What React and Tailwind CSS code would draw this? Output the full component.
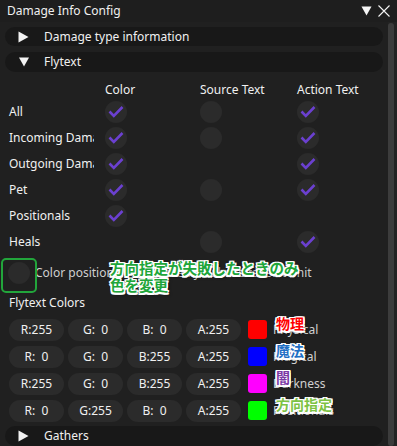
import React from "react";

const outline =
  "[text-shadow:1.5px_0_0_#fff,-1.5px_0_0_#fff,0_1.5px_0_#fff,0_-1.5px_0_#fff,1.5px_1.5px_0_#fff,-1.5px_-1.5px_0_#fff,1.5px_-1.5px_0_#fff,-1.5px_1.5px_0_#fff,2px_2px_3px_rgba(0,0,0,0.7)]";

const rows = [
  { label: "All", color: true, source: false, action: true },
  { label: "Incoming Damage", color: true, source: false, action: true },
  { label: "Outgoing Damage", color: true, source: null, action: true },
  { label: "Pet", color: true, source: false, action: true },
  { label: "Positionals", color: true, source: null, action: null },
  { label: "Heals", color: null, source: false, action: true },
];

const colors = [
  { r: "R:255", g: "G:  0", b: "B:  0", a: "A:255", swatch: "bg-[#ff0000]", label: "Physical", note: "物理", noteColor: "text-[#ff0000]" },
  { r: "R:  0", g: "G:  0", b: "B:255", a: "A:255", swatch: "bg-[#0000ff]", label: "Magical", note: "魔法", noteColor: "text-[#1f6fc4]" },
  { r: "R:255", g: "G:  0", b: "B:255", a: "A:255", swatch: "bg-[#ff00ff]", label: "Darkness", note: "闇", noteColor: "text-[#7b3aa6]" },
  { r: "R:  0", g: "G:255", b: "B:  0", a: "A:255", swatch: "bg-[#00ff00]", label: "Positionals", note: "方向指定", noteColor: "text-[#7cc243]" },
];

function Box({ checked }) {
  if (checked === null) return <div className="w-[22px] h-[22px]" />;
  return (
    <div className="w-[22px] h-[22px] rounded-full bg-[#2b2b2b] flex items-center justify-center">
      {checked && (
        <svg width="22" height="22" viewBox="0 0 22 22">
          <path d="M4.5 10.5 L8.8 14.8 L17.5 6" stroke="#6b40d0" strokeWidth="2.6" fill="none" />
        </svg>
      )}
    </div>
  );
}

function Header({ open, title }) {
  return (
    <div className="h-[20px] w-[378px] rounded-full bg-[#181818] flex items-center">
      <div className="w-[39px] pl-[13px] flex items-center">
        {open ? (
          <svg width="12" height="10" viewBox="0 0 12 10">
            <path d="M1 0.5 H11 L6 9.5 Z" fill="#f2f2f2" />
          </svg>
        ) : (
          <svg width="11" height="12" viewBox="0 0 11 12">
            <path d="M0.5 0.5 L10.5 6 L0.5 11.5 Z" fill="#f2f2f2" />
          </svg>
        )}
      </div>
      <span>{title}</span>
    </div>
  );
}

function Field({ text }) {
  return (
    <div className="w-[55px] h-[22px] rounded-full bg-[#2b2b2b] flex items-center justify-center whitespace-pre">
      {text}
    </div>
  );
}

export default function App() {
  return (
    <div className="w-[397px] h-[446px] overflow-hidden bg-[#202020] text-[#f0f0f0] text-[12px] leading-[16px] font-['Noto_Sans','Noto_Sans_CJK_JP',sans-serif] flex flex-col">
      <div className="h-[22px] shrink-0 flex items-center pl-[7px] pr-[7px] bg-[#1e1e1e]">
        <span className="flex-1">Damage Info Config</span>
        <svg width="11" height="10" viewBox="0 0 11 10" className="mr-[6px]">
          <path d="M0.5 0.5 H10.5 L5.5 9.5 Z" fill="#f4f4f4" />
        </svg>
        <svg width="12" height="12" viewBox="0 0 12 12">
          <path d="M0.5 0.5 L11.5 11.5 M11.5 0.5 L0.5 11.5" stroke="#f4f4f4" strokeWidth="1.1" />
        </svg>
      </div>

      <div className="flex-1 flex min-h-0">
        <div className="w-[388px] pl-[5px] pt-[5px] flex flex-col">
          <Header open={false} title="Damage type information" />
          <div className="mt-[6px]">
            <Header open={true} title="Flytext" />
          </div>

          <div className="mt-[8px] grid grid-cols-[100px_95px_97px_1fr] h-[20px] items-center">
            <span />
            <span>Color</span>
            <span>Source Text</span>
            <span>Action Text</span>
          </div>
          {rows.map((row) => (
            <div key={row.label} className="grid grid-cols-[100px_95px_97px_1fr] h-[27px] items-center">
              <span className="pl-[4px] w-[89px] overflow-hidden whitespace-nowrap">{row.label}</span>
              <Box checked={row.color} />
              <Box checked={row.source} />
              <Box checked={row.action} />
            </div>
          ))}

          <div className="relative mt-[5px] h-[27px] flex items-center pl-[3px] gap-[5px]">
            <div className="absolute left-[-4px] top-[-2px] w-[36px] h-[35px] rounded-[5px] border-2 border-[#22a53b]" />
            <Box checked={false} />
            <span className="whitespace-nowrap text-[#cfcfcf]">Color positionals only when you have failed to hit</span>
            <div className={`absolute left-[105px] top-[0px] text-[14.5px] leading-[17px] font-bold text-[#20a63a] ${outline}`}>
              方向指定が失敗したときのみ
              <br />
              色を変更
            </div>
          </div>

          <div className="mt-[9px] pl-[4px] h-[16px]">Flytext Colors</div>

          <div className="mt-[5px] flex flex-col">
            {colors.map((c) => (
              <div key={c.label} className="relative h-[27px] flex items-center pl-[4px] gap-[4px]">
                <Field text={c.r} />
                <Field text={c.g} />
                <Field text={c.b} />
                <Field text={c.a} />
                <div className={`ml-[3px] w-[19px] h-[19px] rounded-[3px] ${c.swatch}`} />
                <span className="ml-[2px] text-[#d0d0d0]">{c.label}</span>
                <span className={`absolute left-[271px] top-[0px] text-[14px] leading-[16px] font-bold ${c.noteColor} ${outline}`}>
                  {c.note}
                </span>
              </div>
            ))}
          </div>

          <div className="mt-[2px]">
            <Header open={false} title="Gathers" />
          </div>
        </div>
        <div className="w-[9px] flex justify-start pt-[1px] bg-[#232323]">
          <div className="w-[6px] h-full rounded-[3px] bg-[#3c3c3c]" />
        </div>
      </div>
    </div>
  );
}
